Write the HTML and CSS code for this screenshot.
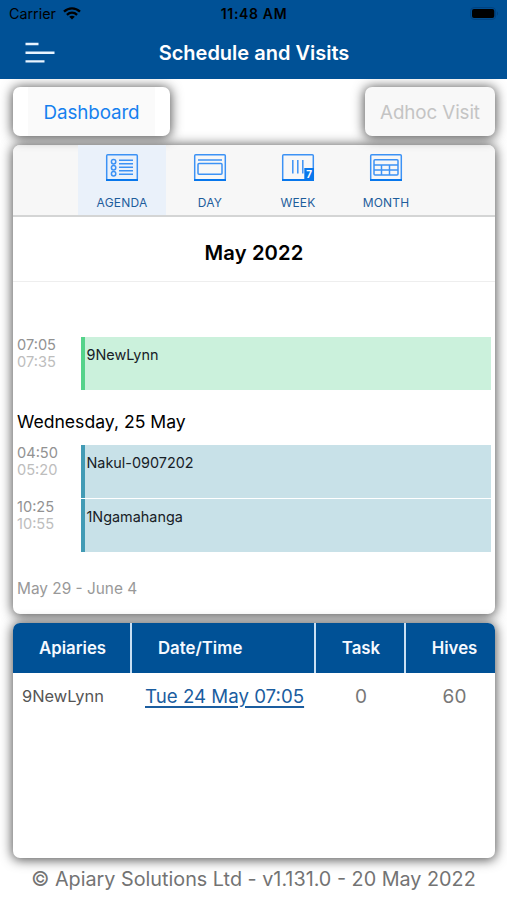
FILE: index.html
```html
<!DOCTYPE html>
<html lang="en">
<head>
<meta charset="utf-8">
<title>Schedule and Visits</title>
<link rel="stylesheet" href="styles.css">
</head>
<body>
<header class="header">
  <div class="status">
    <div class="carrier"><span>Carrier</span>
      <svg width="18" height="13" viewBox="0 0 18 13" fill="none" stroke="#000" stroke-width="2.3"><path d="M1 4.7C5.6.3 12.4.3 17 4.7M3.9 7.8c3-2.8 7.2-2.8 10.2 0"/><path d="M9 12.6 6.2 9.8c1.6-1.5 4-1.5 5.6 0z" fill="#000" stroke="none"/></svg>
    </div>
    <span class="clock">11:48 AM</span>
    <div class="power"><svg width="29" height="13" viewBox="0 0 29 13"><rect x=".6" y=".6" width="25" height="11.8" rx="3.5" fill="none" stroke="#00427f"/><rect x="2" y="2" width="22.3" height="9" rx="2" fill="#000"/><path d="M27 4.5c1.4.7 1.4 3.3 0 4z" fill="#00427f"/></svg></div>
  </div>
  <div class="nav">
    <svg class="menu" width="30" height="22" viewBox="0 0 30 22" stroke="#e8f4ff" stroke-width="2.4"><path d="M.5 2h13M.5 10.7h29M.5 19.4h19"/></svg>
    <h1 class="title">Schedule and Visits</h1>
  </div>
</header>
<main class="main">
  <div class="actions">
    <div class="card button"><span class="button-label">Dashboard</span></div>
    <div class="card button disabled"><span>Adhoc Visit</span></div>
  </div>
  <section class="card calendar">
    <div class="tabs">
      <div class="tab active">
        <svg class="icon" viewBox="0 0 34 30"><rect x="1.7" y="1.7" width="30.6" height="25.6" rx="1"/><path class="base" d="M1 27h32"/><circle cx="8.6" cy="8.7" r="2.2"/><circle cx="8.6" cy="14.7" r="2.2"/><circle cx="8.6" cy="20.7" r="2.2"/><path d="M14 7.2h14M14 10.7h14M14 14.2h14M14 17.7h14M14 21.2h14"/></svg>
        <span>AGENDA</span>
      </div>
      <div class="tab">
        <svg class="icon" viewBox="0 0 34 30"><rect x="1.7" y="1.7" width="30.6" height="25.6" rx="1"/><path class="base" d="M1 27h32"/><path d="M5 7h24"/><rect x="5" y="10.5" width="24" height="10.8" rx="1"/></svg>
        <span>DAY</span>
      </div>
      <div class="tab">
        <svg class="icon" viewBox="0 0 34 30"><rect x="1.7" y="1.7" width="30.6" height="25.6" rx="1"/><path class="base" d="M1 27h32"/><path d="M11.8 7v13.5M16.8 7v13.5M21.8 7v13.5"/><path class="badge" d="M23.3 15H33v13h-9.7z"/><text class="seven" x="28.2" y="25">7</text></svg>
        <span>WEEK</span>
      </div>
      <div class="tab">
        <svg class="icon" viewBox="0 0 34 30"><rect x="1.7" y="1.7" width="30.6" height="25.6" rx="1"/><path class="base" d="M1 27h32"/><rect x="5" y="6.7" width="24" height="15.3" rx="1"/><path d="M5 12h24M5 17h24M12.5 12v10M20.5 12v10"/></svg>
        <span>MONTH</span>
      </div>
    </div>
    <div class="month"><span>May 2022</span></div>
    <div class="agenda-list">
      <div class="row first">
        <div class="times"><span>07:05</span><span class="end">07:35</span></div>
        <div class="event green"><span>9NewLynn</span></div>
      </div>
      <div class="day"><span>Wednesday, 25 May</span></div>
      <div class="row">
        <div class="times"><span>04:50</span><span class="end">05:20</span></div>
        <div class="event"><span>Nakul-0907202</span></div>
      </div>
      <div class="row">
        <div class="times"><span>10:25</span><span class="end">10:55</span></div>
        <div class="event"><span>1Ngamahanga</span></div>
      </div>
      <div class="week"><span>May 29 - June 4</span></div>
    </div>
  </section>
  <section class="card visits">
    <div class="grid head">
      <div><span>Apiaries</span></div><div class="date-head"><span>Date/Time</span></div><div><span>Task</span></div><div class="hives-head"><span>Hives</span></div>
    </div>
    <div class="grid body">
      <div class="name"><span>9NewLynn</span></div><div class="date"><a>Tue 24 May 07:05</a></div><div><span>0</span></div><div class="hives"><span>60</span></div>
    </div>
  </section>
</main>
<footer class="footer"><span>© Apiary Solutions Ltd - v1.131.0 - 20 May 2022</span></footer>
</body>
</html>
```
FILE: styles.css
```css
* { box-sizing: border-box; }
body { margin: 0; width: 507px; height: 900px; overflow: hidden; background: #fff; color: #000; font-family: Inter, "Liberation Sans", sans-serif; white-space: nowrap; display: flex; flex-direction: column; }
.header { height: 79px; flex: none; background: #005196; position: relative; z-index: 1; }
.status { height: 27px; padding: 0 8px 0 9px; display: grid; grid-template-columns: 1fr auto 1fr; align-items: center; font-size: 14.3px; }
.carrier { display: flex; align-items: center; gap: 7px; }
.clock { font-weight: 600; font-size: 14px; letter-spacing: .65px; }
.power { display: flex; justify-content: flex-end; }
.nav { height: 52px; display: grid; grid-template-columns: 1fr auto 1fr; align-items: center; }
.menu { margin-left: 25px; }
.title { margin: 0; padding-left: 1px; font-size: 20px; font-weight: 600; line-height: 24px; color: #fff; }
.main { padding: 8px 12px 0 13px; flex: none; }
.card { background: #fff; border-radius: 7px; box-shadow: 0 1px 12px 1px rgba(0,0,0,.68); }
.actions { display: flex; justify-content: space-between; height: 49px; margin-bottom: 9px; }
.button { padding: 0 15px; font-size: 18.8px; color: #1580ef; display: flex; background: #fff; }
.button span { display: flex; align-items: center; justify-content: center; padding-top: 2px; }
.button-label { width: 127px; background: #fafafa; }
.button .button-label { letter-spacing: -.1px; }
.disabled { width: 130px; padding: 0; justify-content: center; background: #f8f8f8; color: #c4c4c4; letter-spacing: -.1px; }
.calendar { height: 469px; margin-bottom: 9px; overflow: hidden; }
.tabs { height: 72px; padding-left: 65px; display: flex; background: #f7f7f7; border-bottom: 2px solid #d4d5d5; }
.tab { width: 88px; display: flex; flex-direction: column; align-items: center; padding-top: 8px; font-size: 12px; line-height: 16px; color: #1e5d9c; letter-spacing: .2px; }
.active { background: #eaf1fa; }
.icon { width: 34px; height: 30px; margin-bottom: 12px; fill: none; stroke: #3c92f5; stroke-width: 1.5; }
.base { stroke: #0877ec; stroke-width: 2; }
.badge { fill: #0877ec; stroke: none; }
.seven { fill: #fff; stroke: none; font-size: 10px; font-weight: 700; text-anchor: middle; }
.month { height: 65px; display: flex; align-items: center; justify-content: center; padding-top: 7px; font-size: 20.2px; font-weight: 600; letter-spacing: .15px; border-bottom: 1px solid #eee; }
.agenda-list { padding: 55px 4px 0; }
.row { height: 53.5px; display: flex; }
.first { height: 54px; }
.times { width: 63.5px; display: flex; flex-direction: column; font-size: 14.6px; line-height: 17px; color: #929292; }
.end { color: #bdbdbd; }
.times span { align-self: flex-start; }
.event { flex: 1; height: 53px; padding: 9px 2px; border-left: 4px solid #429bb5; background: #c8e1e8; font-size: 14.4px; line-height: 18px; color: #172026; }
.green { border-color: #55d38a; background: #cbf1dc; }
.day { height: 54px; padding-top: 19px; font-size: 17.6px; line-height: 24px; }
.week { padding-top: 26px; font-size: 15.4px; line-height: 22px; color: #999; }
.visits { height: 235px; overflow: hidden; }
.grid { display: grid; grid-template-columns: 119px 184px 90px 89px; align-items: center; text-align: center; }
.head { height: 50px; background: #005196; color: #f5f9ff; font-size: 16.8px; font-weight: 600; }
.head > div { height: 50px; line-height: 51px; border-right: 2px solid #c8dff3; padding-left: 2px; }
.head .hives-head { border: 0; padding-left: 8px; }
.head .date-head { text-align: left; padding-left: 26px; }
.body { height: 46px; font-size: 19px; color: #777; }
.body .name { font-size: 16.4px; color: #555; text-align: left; padding-left: 9px; }
.body .date { text-align: left; padding-left: 13px; font-size: 18.7px; }
.date a { color: #1b5d9f; text-decoration: underline; text-decoration-thickness: 1.5px; text-underline-offset: 3px; }
.hives { padding-left: 8px; }
.footer { height: 43px; display: flex; align-items: center; justify-content: center; font-size: 19.8px; color: #737373; }
```
